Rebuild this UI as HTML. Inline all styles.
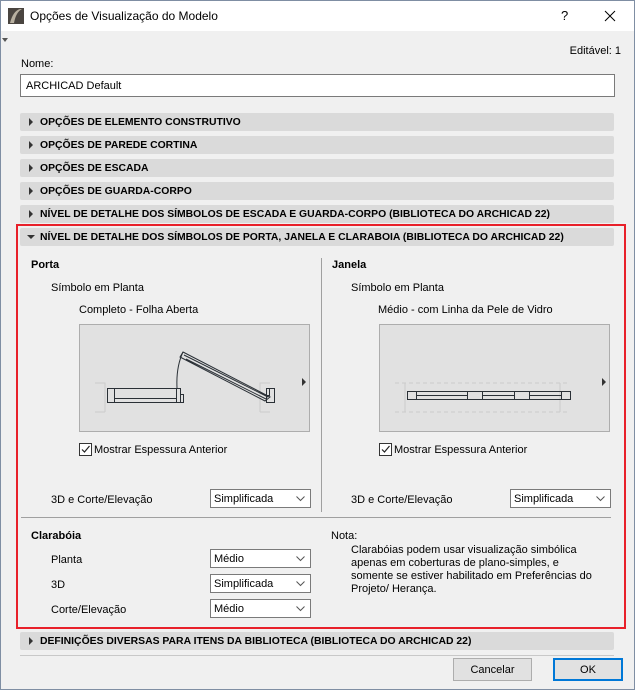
<html><head><style>
body{margin:0;width:635px;height:690px;background:#f0f0f0;font-family:"Liberation Sans",sans-serif;font-size:11px;color:#000;position:relative;overflow:hidden}
.a{position:absolute;white-space:nowrap}
.hdr{position:absolute;left:20px;width:594px;height:18px;background:#dadada;border-radius:2px;font-weight:bold;font-size:10.4px;line-height:19px}
.hdr span{position:absolute;left:20px}
.tri{position:absolute;left:9px;top:5px;width:0;height:0;border-top:4px solid transparent;border-bottom:4px solid transparent;border-left:4px solid #333}
.dd{position:absolute;width:99px;height:17px;background:#fff;border:1px solid #7a7a7a;line-height:18px}
.dd span{position:absolute;left:3px}
.dd svg{position:absolute;right:5px;top:6px}
.pv{position:absolute;width:229px;height:106px;background:#e1e1e1;border:1px solid #adadad}
.cb{position:absolute;width:11px;height:11px;border:1px solid #333;background:#fff}
</style></head><body>
<div class="a" style="left:0;top:0;width:635px;height:31px;background:#fff"></div>
<div class="a" style="left:0;top:0;width:633px;height:688px;border:1px solid #7f8ea3"></div>
<svg class="a" style="left:8px;top:8px" width="16" height="16"><rect width="16" height="16" fill="#4a4540"/><path d="M2 15 Q5 3 12 1 L14 1 Q8 4 6 15Z" fill="#b8b0a0"/></svg>
<div class="a" style="left:30px;top:9px;font-size:12px">Opções de Visualização do Modelo</div>
<div class="a" style="left:561px;top:8px;font-size:13px">?</div>
<svg class="a" style="left:604px;top:10px" width="12" height="12"><path d="M1 1L11 11M11 1L1 11" stroke="#000" stroke-width="1"/></svg>
<div class="a" style="left:2px;top:38px;border-left:3px solid transparent;border-right:3px solid transparent;border-top:4px solid #555"></div>
<div class="a" style="right:14px;top:45px">Editável: 1</div>
<div class="a" style="left:21px;top:58px">Nome:</div>
<div class="a" style="left:20px;top:74px;width:593px;height:21px;background:#fff;border:1px solid #7a7a7a;line-height:22px"><span style="position:absolute;left:5px">ARCHICAD Default</span></div>
<div class="hdr" style="top:113px"><i class="tri"></i><span>OPÇÕES DE ELEMENTO CONSTRUTIVO</span></div>
<div class="hdr" style="top:136px"><i class="tri"></i><span>OPÇÕES DE PAREDE CORTINA</span></div>
<div class="hdr" style="top:159px"><i class="tri"></i><span>OPÇÕES DE ESCADA</span></div>
<div class="hdr" style="top:182px"><i class="tri"></i><span>OPÇÕES DE GUARDA-CORPO</span></div>
<div class="hdr" style="top:205px"><i class="tri"></i><span>NÍVEL DE DETALHE DOS SÍMBOLOS DE ESCADA E GUARDA-CORPO (BIBLIOTECA DO ARCHICAD 22)</span></div>
<div class="hdr" style="top:228px"><i class="a" style="left:7px;top:7px;border-left:4px solid transparent;border-right:4px solid transparent;border-top:4px solid #333"></i><span>NÍVEL DE DETALHE DOS SÍMBOLOS DE PORTA, JANELA E CLARABOIA (BIBLIOTECA DO ARCHICAD 22)</span></div>
<div class="a" style="left:16px;top:224px;width:606px;height:401px;border:2px solid #e8202a"></div>
<div class="a" style="left:31px;top:259px;font-weight:bold">Porta</div>
<div class="a" style="left:332px;top:259px;font-weight:bold">Janela</div>
<div class="a" style="left:321px;top:258px;width:1px;height:254px;background:#a0a0a0"></div>
<div class="a" style="left:51px;top:282px">Símbolo em Planta</div>
<div class="a" style="left:351px;top:282px">Símbolo em Planta</div>
<div class="a" style="left:79px;top:304px">Completo - Folha Aberta</div>
<div class="a" style="left:378px;top:304px">Médio - com Linha da Pele de Vidro</div>
<div class="pv" style="left:79px;top:324px"><svg width="229" height="106" fill="none" stroke="#2a3036" stroke-width="1">
<path d="M15 58H25V87M15 87H25" stroke="#ccc"/><path d="M190 58H180V87M190 87H180" stroke="#ccc"/>
<rect x="27.5" y="63.5" width="73" height="14"/><path d="M34.5 63.5V77.5M34.5 73.5H96.5M96.5 63.5V77.5M100.5 69.5H103.5V77.5H100.5"/>
<rect x="186.5" y="63.5" width="8" height="14"/><path d="M186.5 70.5H189.5V63.5"/>
<path d="M97 63Q96 42 103 27"/><path d="M103 27L190 72L185 76L100 32Z M106 34L186 74 M104 30L188 72"/>
<path d="M222 53L226 57L222 61Z" fill="#333" stroke="none"/></svg></div>
<div class="pv" style="left:379px;top:324px"><svg width="229" height="106" fill="none" stroke="#2a3036" stroke-width="1">
<path d="M15 58H190M15 87H190" stroke="#ccc" stroke-dasharray="4 3"/><path d="M25 58V87M180 58V87" stroke="#ccc"/>
<rect x="27.5" y="66.5" width="163" height="8"/><path d="M36.5 66.5V74.5M87.5 66.5V74.5M102.5 66.5V74.5M134.5 66.5V74.5M149.5 66.5V74.5M181.5 66.5V74.5M36.5 70.5H87.5M102.5 70.5H134.5M149.5 70.5H181.5"/>
<path d="M222 53L226 57L222 61Z" fill="#333" stroke="none"/></svg></div>
<div class="cb" style="left:79px;top:443px"><svg width="11" height="11" style="position:absolute"><path d="M2 5.5L4.5 8L9.5 2" stroke="#222" fill="none" stroke-width="1.2"/></svg></div>
<div class="a" style="left:94px;top:444px">Mostrar Espessura Anterior</div>
<div class="cb" style="left:379px;top:443px"><svg width="11" height="11" style="position:absolute"><path d="M2 5.5L4.5 8L9.5 2" stroke="#222" fill="none" stroke-width="1.2"/></svg></div>
<div class="a" style="left:394px;top:444px">Mostrar Espessura Anterior</div>
<div class="a" style="left:51px;top:494px">3D e Corte/Elevação</div>
<div class="a" style="left:351px;top:494px">3D e Corte/Elevação</div>
<div class="dd" style="left:210px;top:489px"><span>Simplificada</span><svg width="9" height="6"><path d="M0.5 0.5L4.5 4.5L8.5 0.5" stroke="#555" fill="none"/></svg></div>
<div class="dd" style="left:510px;top:489px"><span>Simplificada</span><svg width="9" height="6"><path d="M0.5 0.5L4.5 4.5L8.5 0.5" stroke="#555" fill="none"/></svg></div>
<div class="a" style="left:21px;top:517px;width:590px;height:1px;background:#a0a0a0"></div>
<div class="a" style="left:31px;top:530px;font-weight:bold">Clarabóia</div>
<div class="a" style="left:51px;top:554px">Planta</div>
<div class="a" style="left:51px;top:579px">3D</div>
<div class="a" style="left:51px;top:604px">Corte/Elevação</div>
<div class="dd" style="left:210px;top:549px"><span>Médio</span><svg width="9" height="6"><path d="M0.5 0.5L4.5 4.5L8.5 0.5" stroke="#555" fill="none"/></svg></div>
<div class="dd" style="left:210px;top:574px"><span>Simplificada</span><svg width="9" height="6"><path d="M0.5 0.5L4.5 4.5L8.5 0.5" stroke="#555" fill="none"/></svg></div>
<div class="dd" style="left:210px;top:599px"><span>Médio</span><svg width="9" height="6"><path d="M0.5 0.5L4.5 4.5L8.5 0.5" stroke="#555" fill="none"/></svg></div>
<div class="a" style="left:331px;top:530px">Nota:</div>
<div class="a" style="left:351px;top:544px;line-height:13px">Clarabóias podem usar visualização simbólica<br>apenas em coberturas de plano-simples, e<br>somente se estiver habilitado em Preferências do<br>Projeto/ Herança.</div>
<div class="hdr" style="top:632px"><i class="tri"></i><span>DEFINIÇÕES DIVERSAS PARA ITENS DA BIBLIOTECA (BIBLIOTECA DO ARCHICAD 22)</span></div>
<div class="a" style="left:20px;top:655px;width:594px;height:1px;background:#c8c8c8"></div>
<div class="a" style="left:453px;top:658px;width:77px;height:21px;background:#e1e1e1;border:1px solid #adadad;text-align:center;line-height:22px">Cancelar</div>
<div class="a" style="left:553px;top:658px;width:66px;height:19px;background:#e1e1e1;border:2px solid #0078d7;text-align:center;line-height:20px">OK</div>
</body></html>
